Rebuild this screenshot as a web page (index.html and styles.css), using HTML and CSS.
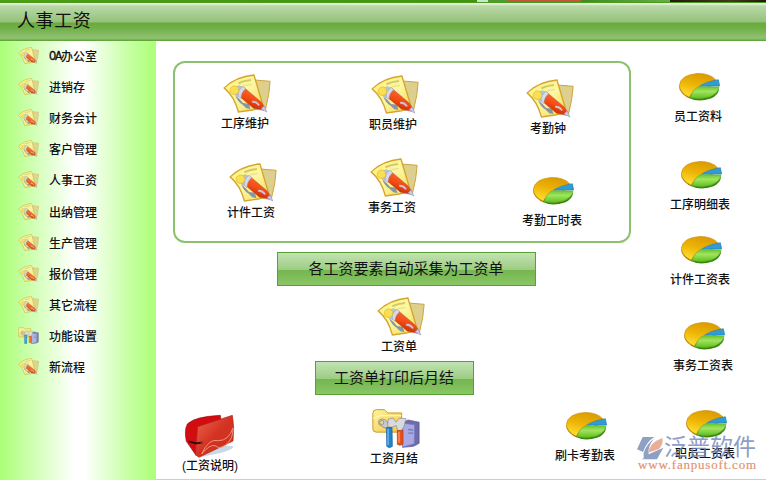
FILE: index.html
```
<!DOCTYPE html>
<html lang="zh-CN">
<head>
	<title>人事工资</title>
	<meta charset="utf-8">
	<link rel="stylesheet" href="styles.css">
</head>
<body>
	<svg class="defs" width="0" height="0">
		<defs>
			<linearGradient id="paper" x1="0" y1="0" x2="1" y2="1">
				<stop offset="0" stop-color="#fff27a" /><stop offset="0.5" stop-color="#fdf6a4" /><stop offset="1" stop-color="#f3d94a" />
			</linearGradient>
			<linearGradient id="pen" x1="0.3" y1="0.9" x2="0.6" y2="0.2">
				<stop offset="0" stop-color="#b92a08" /><stop offset="0.5" stop-color="#f24a12" /><stop offset="1" stop-color="#f8662e" />
			</linearGradient>
			<linearGradient id="gold" x1="0.7" y1="0" x2="0.3" y2="1">
				<stop offset="0" stop-color="#d99a00" /><stop offset="0.5" stop-color="#edb306" /><stop offset="1" stop-color="#ffe02e" />
			</linearGradient>
			<linearGradient id="lime" x1="0" y1="0" x2="0" y2="1">
				<stop offset="0" stop-color="#6cc62e" /><stop offset="0.4" stop-color="#a0e460" /><stop offset="1" stop-color="#62c01c" />
			</linearGradient>
			<linearGradient id="red" x1="0" y1="0" x2="1" y2="1">
				<stop offset="0" stop-color="#ea6a4e" /><stop offset="0.5" stop-color="#d43222" /><stop offset="1" stop-color="#c8321f" />
			</linearGradient>
			<linearGradient id="folder" x1="0" y1="0" x2="1" y2="1">
				<stop offset="0" stop-color="#fff3a0" /><stop offset="1" stop-color="#f4c63c" />
			</linearGradient>
		</defs>
		<symbol id="notes" viewBox="0 0 144 118">
			<path d="M92 18 142 22Q140 62 128 106L80 101Z" fill="#ddd08f" stroke="#d0a33c" stroke-width="3" />
			<path d="M3 42Q38 8 93 3L122 101 88 109 46 115Q34 68 3 42Z" fill="url(#paper)" stroke="#d5a52b" stroke-width="4" />
			<path d="M46 28Q62 20 84 18" fill="none" stroke="#cfcb68" stroke-width="6" />
			<path d="M64 35 86 32" fill="none" stroke="#e0dc86" stroke-width="3" />
			<path d="M36 64Q50 74 60 88L78 90 82 106 70 104 58 92Q44 84 36 64Z" fill="#8795a4" />
			<path d="M28 58Q30 38 49 34L64 40 54 70 42 69Z" fill="#b9c1d4" />
			<path d="M62 40Q50 50 52 70L92 104 122 110Q130 104 114 84Z" fill="url(#pen)" stroke="#b64a2a" stroke-width="1.5" />
			<path d="M61 37Q42 48 46 68L54 74Q54 56 68 45Z" fill="#d5d9e8" stroke="#9295ad" stroke-width="1.5" />
			<circle cx="34" cy="49" r="13" fill="#f9df52" stroke="#dfb92d" stroke-width="2" />
			<path d="M90 84Q100 84 107 93" fill="none" stroke="#cfc0dc" stroke-width="6" stroke-linecap="round" />
			<path d="M114 106 124 96 132 115Z" fill="#c8c9e8" stroke="#8586ac" stroke-width="1.5" />
		</symbol>
		<symbol id="pie" viewBox="0 0 124 84">
			<path d="M1 38 2 49Q8 66 32 77L38 67Z" fill="#a6700b" />
			<path d="M31 67 32 76Q58 89 96 77 120 66 121 47L90 40Z" fill="#398510" />
			<path d="M31 73Q3 60 1 38 5 4 58 1 94 1 112 21L78 30Q46 44 31 73Z" fill="url(#gold)" stroke="#c98c06" stroke-width="2" />
			<path d="M62 40Q82 26 119 20L123 39Z" fill="#319bd4" stroke="#1c7cb6" stroke-width="2" />
			<path d="M34 74Q40 50 60 41L121 42Q119 61 92 72 62 80 34 74Z" fill="url(#lime)" stroke="#66b52c" stroke-width="2" />
		</symbol>
		<symbol id="wallet" viewBox="0 0 156 132">
			<path d="M24 108Q55 90 148 96 152 112 44 130Z" fill="#c8d8e5" />
			<path d="M7 82Q0 50 10 30 32 8 109 4L111 22 36 124Z" fill="#d30c12" stroke="#a60a0a" stroke-width="2" />
			<path d="M41 38 145 4Q152 40 147 81L45 130 34 122Z" fill="url(#red)" stroke="#b0261c" stroke-width="2" />
			<path d="M53 120Q74 72 104 80 134 80 147 42 149 74 124 94 104 106 96 96 78 88 53 120Z" fill="none" stroke="#ee9678" stroke-width="3" />
			<path d="M14 82 36 88 53 86" fill="none" stroke="#230c0c" stroke-width="5" />
			<circle cx="53" cy="86" r="4" fill="#7b2c28" />
		</symbol>
		<symbol id="tools" viewBox="0 0 144 118">
			<path d="M2 13Q2 3 13 2H37L47 12H89V70H12Q2 70 2 60Z" fill="url(#folder)" stroke="#c59a28" stroke-width="3" />
			<path d="M3 28 24 20H88" fill="none" stroke="#fff7ba" stroke-width="4" />
			<path d="M92 43 108 33 142 40V104L125 113 92 116Z" fill="#6e6bae" stroke="#54528c" stroke-width="2" />
			<path d="M92 43 128 48 127 105 92 115Z" fill="#a9aae3" stroke="#7c7dc0" stroke-width="2" />
			<path d="M109 62 124 64M109 73 124 73" stroke="#7578b9" stroke-width="4" />
			<path d="M20 35Q30 25 43 36 49 48 60 54L50 62Q31 55 20 46Z" fill="#c7c9cc" stroke="#777a7d" stroke-width="2" />
			<circle cx="29" cy="41" r="6" fill="#f4dd83" stroke="#777a7d" stroke-width="2" />
			<path d="M47 54 48 31 63 27 72 40 82 28 102 29 96 53 88 66H77L73 50 60 55Z" fill="#d9dadd" stroke="#85888c" stroke-width="2" />
			<path d="M43 56H60L61 113Q52 121 44 113Z" fill="#2381cd" stroke="#135c9f" stroke-width="2" />
			<path d="M48 60V109" stroke="#74bdf0" stroke-width="4" />
			<path d="M76 65H93V106Q85 113 76 107Z" fill="#e94f19" stroke="#af3710" stroke-width="2" />
			<path d="M81 69V102" stroke="#ff9c67" stroke-width="4" />
		</symbol>
	</svg>

	<div class="strip"></div>
	<div class="header">人事工资</div>
	<div class="main">
		<div class="menu">
			<div class="item"><svg><use href="#notes" /></svg><span class="en">OA</span>办公室</div>
			<div class="item"><svg><use href="#notes" /></svg>进销存</div>
			<div class="item"><svg><use href="#notes" /></svg>财务会计</div>
			<div class="item"><svg><use href="#notes" /></svg>客户管理</div>
			<div class="item"><svg><use href="#notes" /></svg>人事工资</div>
			<div class="item"><svg><use href="#notes" /></svg>出纳管理</div>
			<div class="item"><svg><use href="#notes" /></svg>生产管理</div>
			<div class="item"><svg><use href="#notes" /></svg>报价管理</div>
			<div class="item"><svg><use href="#notes" /></svg>其它流程</div>
			<div class="item"><svg><use href="#tools" /></svg>功能设置</div>
			<div class="item"><svg><use href="#notes" /></svg>新流程</div>
		</div>
		<div class="canvas">
			<div class="flow">
				<div class="group"></div>
				<div class="bar bar1">各工资要素自动采集为工资单</div>
				<div class="bar bar2">工资单打印后月结</div>
			</div>

			<!-- 流程图节点 -->
			<div class="node notes n1"><svg><use href="#notes" /></svg><span>工序维护</span></div>
			<div class="node notes n2"><svg><use href="#notes" /></svg><span>职员维护</span></div>
			<div class="node notes n3"><svg><use href="#notes" /></svg><span>考勤钟</span></div>
			<div class="node notes n4"><svg><use href="#notes" /></svg><span>计件工资</span></div>
			<div class="node notes n5"><svg><use href="#notes" /></svg><span>事务工资</span></div>
			<div class="node pie n6"><svg><use href="#pie" /></svg><span>考勤工时表</span></div>
			<div class="node notes n7"><svg><use href="#notes" /></svg><span>工资单</span></div>
			<div class="node wallet n8"><svg><use href="#wallet" /></svg><span>(工资说明)</span></div>
			<div class="node notes n9"><svg><use href="#tools" /></svg><span>工资月结</span></div>
			<div class="node pie n10"><svg><use href="#pie" /></svg><span>刷卡考勤表</span></div>
			<div class="node pie n11"><svg><use href="#pie" /></svg><span>员工资料</span></div>
			<div class="node pie n12"><svg><use href="#pie" /></svg><span>工序明细表</span></div>
			<div class="node pie n13"><svg><use href="#pie" /></svg><span>计件工资表</span></div>
			<div class="node pie n14"><svg><use href="#pie" /></svg><span>事务工资表</span></div>
			<div class="node pie n15"><svg><use href="#pie" /></svg><span>职员工资表</span></div>

			<div class="mark">
				<div class="brand">
					<svg viewBox="0 0 81 69">
						<path d="M17 0H52Q29 14 18 45L0 37Z" fill="#7489b5" />
						<path d="M76 3Q80 21 66 36L34 47Q37 17 76 3Z" fill="#e69b7c" />
						<path d="M20 48Q27 23 51 5 31 29 35 52L79 32 60 67H13Q36 57 63 44 42 53 20 66Z" fill="#7489b5" />
					</svg>
					<span>泛普软件</span>
				</div>
				<div class="url">www.fanpusoft.com</div>
			</div>
		</div>
	</div>
</body>
</html>
```
FILE: styles.css
```
* {
	box-sizing: border-box;
}
body {
	margin: 0;
	width: 766px;
	height: 480px;
	overflow: hidden;
	background: #fff;
	color: #111;
	font-family: "Liberation Sans", "Noto Sans CJK SC", sans-serif;
	font-size: 12px;
}
svg {
	display: block;
	flex: none;
}
.defs {
	position: absolute;
}
.strip {
	height: 3px;
	border-bottom: 1px solid #4c9b20;
	background: linear-gradient(90deg, #4aa00e 0, #3f960b 477px, #cbe5d2 477px, #cbe5d2 488px, #4e9c2f 488px, #4e9c2f 508px, #bd5b38 508px, #bd5b38 581px, #3b8d20 581px, #67ae45 670px, #231a12 670px, #40391e 730px, #251910 766px);
}
.header {
	height: 38px;
	padding-left: 17px;
	line-height: 36px;
	font-size: 18px;
	letter-spacing: 0.6px;
	border-bottom: 1px solid #61a63b;
	background: linear-gradient(#e4f1db 0, #e4f1db 1px, #b9d8a6 3px, #95c27b 19px, #69aa3d 20px, #70af47 25px, #90c172 35px, #76b251 37px);
}
.main {
	display: flex;
	height: 439px;
}
.menu {
	width: 156px;
	padding-left: 18px;
	background: linear-gradient(90deg, #aaff76 0, #c4ff9f 22px, #fff 75px, #fff 84px, #c3ff9e 132px, #adff77 156px);
}
.item {
	display: flex;
	align-items: center;
	height: 31.1px;
	padding-bottom: 2px;
	font-weight: 500;
}
.item svg {
	width: 21px;
	height: 17px;
	margin-right: 10px;
	opacity: 0.85;
}
.en {
	padding-top: 3px;
	font-family: "Liberation Mono", monospace;
	font-size: 12px;
	letter-spacing: -1.2px;
	-webkit-text-stroke: 0.3px #111;
}
.canvas {
	position: relative;
	flex: 1;
	border-bottom: 1px solid #c0dcae;
}
.flow {
	display: flex;
	flex-direction: column;
	align-items: center;
	width: 458px;
	margin-left: 17px;
	padding-top: 20px;
}
.group {
	width: 458px;
	height: 182px;
	border: 2px solid #8cc26f;
	border-radius: 12px;
}
.bar {
	height: 34px;
	text-align: center;
	line-height: 31px;
	font-size: 15px;
	border: 1px solid #58a234;
	background: linear-gradient(#c2e3b2, #9dcc83 52%, #74b64f 54%, #8ac665);
}
.bar1 {
	width: 259px;
	margin-top: 9px;
	margin-left: 8px;
}
.bar2 {
	width: 159px;
	margin-top: 75px;
	margin-right: 16px;
}

.node {
	position: absolute;
	width: 72px;
	display: flex;
	flex-direction: column;
	align-items: center;
	font-weight: 500;
	line-height: 14px;
	white-space: nowrap;
}
.notes svg {
	width: 48px;
	height: 39px;
	margin: 0 0 4px 3px;
}
.pie svg {
	width: 41px;
	height: 28px;
	margin: 0 0 9px 3px;
}
.wallet svg {
	width: 52px;
	height: 44px;
	margin-bottom: 1px;
}
.n1 { left: 53px; top: 33px; }
.n2 { left: 201px; top: 34px; }
.n3 { left: 356px; top: 38px; }
.n4 { left: 59px; top: 122px; }
.n5 { left: 200px; top: 117px; }
.n6 { left: 360px; top: 136px; }
.n7 { left: 207px; top: 256px; }
.n8 { left: 18px; top: 373px; }
.n9 { left: 202px; top: 368px; }
.n10 { left: 393px; top: 371px; }
.n11 { left: 506px; top: 32px; }
.n12 { left: 508px; top: 120px; }
.n13 { left: 508px; top: 195px; }
.n14 { left: 511px; top: 281px; }
.n15 { left: 513px; top: 369px; }

.mark {
	position: absolute;
	left: 481px;
	top: 393px;
	opacity: 0.8;
}
.brand {
	display: flex;
	align-items: center;
	height: 26px;
	color: #7086b8;
	font-size: 23px;
	line-height: 26px;
}
.brand svg {
	width: 27px;
	height: 23px;
	margin-top: 2px;
}
.url {
	margin: -2px 0 0 1px;
	color: #dc7a4c;
	font-family: "Liberation Serif", serif;
	font-size: 13px;
	line-height: 13px;
	letter-spacing: 0.8px;
	-webkit-text-stroke: 0.2px #dc7a4c;
}
```
